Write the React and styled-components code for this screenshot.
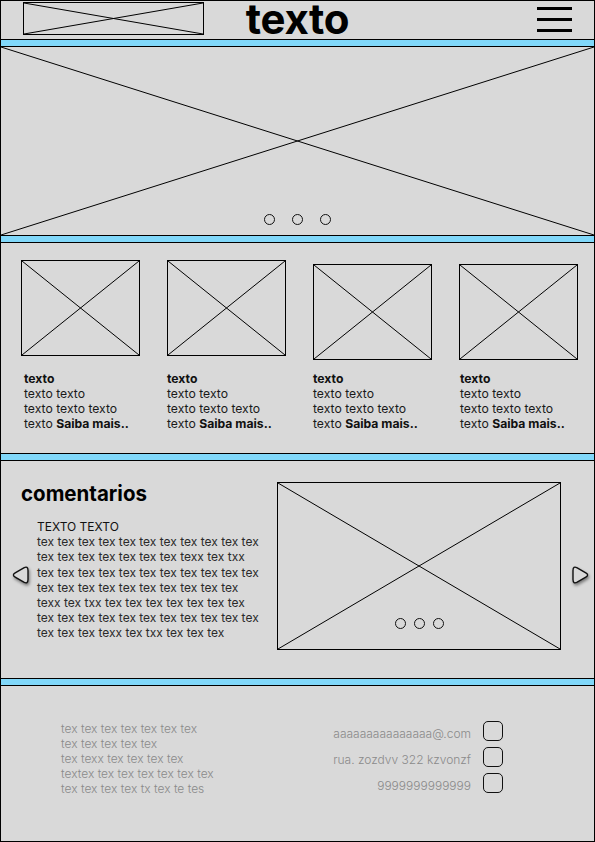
import React from "react";
import styled, { createGlobalStyle } from "styled-components";

const GlobalStyle = createGlobalStyle`
  html, body {
    margin: 0;
    padding: 0;
    background: #d9d9d9;
  }
  * {
    box-sizing: border-box;
  }
`;

const Page = styled.div`
  width: 595px;
  height: 842px;
  border: 1px solid #000;
  background: #d9d9d9;
  display: flex;
  flex-direction: column;
  font-family: Inter, "Noto Sans", sans-serif;
  color: #111;
`;

const Header = styled.header`
  height: 38px;
  display: grid;
  grid-template-columns: 1fr auto 1fr;
  align-items: start;
  padding: 0 22px;
`;

const Title = styled.h1`
  margin: 0;
  font-size: 42px;
  line-height: 34px;
  padding-top: 1px;
  font-weight: 700;
  letter-spacing: -0.3px;
  color: #000;
`;

const Burger = styled.div`
  justify-self: end;
  width: 35px;
  margin-top: 6px;
  display: flex;
  flex-direction: column;
  gap: 8px;
`;

const BurgerBar = styled.span`
  display: block;
  height: 3px;
  background: #000;
`;

const Divider = styled.div`
  height: 8px;
  background: #81d8fa;
  border-top: 1px solid #000;
  border-bottom: 1px solid #000;
  flex-shrink: 0;
`;

const Frame = styled.div`
  position: relative;
  width: ${(p) => p.$w || "auto"};
  height: ${(p) => p.$h};
  margin-top: ${(p) => p.$top || 0}px;
  border: ${(p) => (p.$border ? "1px solid #000" : "none")};
  display: flex;
  flex-direction: column;
  justify-content: flex-end;
  align-items: center;
  padding-bottom: ${(p) => p.$pb || 0}px;
  flex-shrink: 0;
`;

const Cross = styled.svg`
  position: absolute;
  inset: 0;
  width: 100%;
  height: 100%;
`;

const Dots = styled.div`
  position: relative;
  display: flex;
  gap: ${(p) => p.$gap}px;
`;

const Dot = styled.span`
  width: 11px;
  height: 11px;
  border: 1px solid #111;
  border-radius: 50%;
`;

const Placeholder = ({ children, ...rest }) => (
  <Frame {...rest}>
    <Cross viewBox="0 0 100 100" preserveAspectRatio="none">
      <line x1="0" y1="0" x2="100" y2="100" stroke="#000" strokeWidth="1" vectorEffect="non-scaling-stroke" />
      <line x1="100" y1="0" x2="0" y2="100" stroke="#000" strokeWidth="1" vectorEffect="non-scaling-stroke" />
    </Cross>
    {children}
  </Frame>
);

const CardsSection = styled.section`
  height: 210px;
  padding: 17px 0 0 20px;
  display: grid;
  grid-template-columns: repeat(4, 119px);
  column-gap: 27px;
  align-items: start;
`;

const Card = styled.div`
  display: flex;
  flex-direction: column;
`;

const CardMedia = styled.div`
  height: 100px;
`;

const CardText = styled.p`
  margin: 11px 0 0;
  padding-left: ${(p) => p.$inset || 0}px;
  font-size: 12.2px;
  line-height: 15px;
  color: #1a1a1a;
  white-space: nowrap;

  b {
    font-weight: 700;
    color: #111;
  }
`;

const CommentsSection = styled.section`
  height: 217px;
  padding-top: 21px;
  display: grid;
  grid-template-columns: 10px 10px 8px 8px 240px 284px 11px 18px 1fr;
  grid-template-rows: 24px 144px;
`;

const SectionTitle = styled.h2`
  grid-column: 3 / 6;
  grid-row: 1;
  margin: 0;
  font-size: 20.5px;
  line-height: 24px;
  font-weight: 700;
  color: #000;
`;

const Arrow = styled.svg`
  grid-column: ${(p) => p.$col};
  grid-row: 2;
  align-self: center;
  width: 18px;
  height: 20px;
  margin-bottom: 6px;
  filter: drop-shadow(1px 2px 1.5px rgba(0, 0, 0, 0.45));
`;

const Quote = styled.div`
  grid-column: 5;
  grid-row: 2;
  padding-top: 13px;
  font-size: 12px;
  line-height: 15.2px;
  color: #2a2a2a;
  white-space: nowrap;
`;

const QuoteHead = styled.div`
  color: #111;
`;

const CommentMedia = styled.div`
  grid-column: 6;
  grid-row: 1 / 3;
`;

const Footer = styled.footer`
  flex: 1;
  display: flex;
  justify-content: space-between;
  align-items: flex-start;
  padding: 35px 91px 0 60px;
  font-size: 12px;
  line-height: 15px;
  font-weight: 300;
  color: #8a8a8a;
`;

const FooterText = styled.div`
  white-space: nowrap;
`;

const ContactList = styled.div`
  display: flex;
  flex-direction: column;
  gap: 6px;
`;

const ContactRow = styled.div`
  display: flex;
  align-items: center;
  justify-content: flex-end;
  gap: 12px;
`;

const ContactLabel = styled.span`
  padding-top: 5px;
  white-space: nowrap;
`;

const ContactIcon = styled.span`
  width: 20px;
  height: 20px;
  border: 1.5px solid #111;
  border-radius: 5px;
`;

const LeftArrowPath = "M4.2 7.8 L12.8 2.8 Q17 0.6 17 5.4 L17 14.6 Q17 19.4 12.8 17.2 L4.2 12.2 Q0.6 10 4.2 7.8 Z";
const RightArrowPath = "M13.8 7.8 L5.2 2.8 Q1 0.6 1 5.4 L1 14.6 Q1 19.4 5.2 17.2 L13.8 12.2 Q17.4 10 13.8 7.8 Z";

const cards = [
  { top: 0, inset: 3 },
  { top: 0, inset: 0 },
  { top: 4, inset: 0 },
  { top: 4, inset: 1 },
];

const quoteLines = [
  "tex tex tex tex tex tex tex tex tex tex tex",
  "tex tex tex tex tex tex tex texx tex txx",
  "tex tex tex tex tex tex tex tex tex tex tex",
  "tex tex tex tex tex tex tex tex tex tex",
  "texx tex txx tex tex tex tex tex tex tex",
  "tex tex tex tex tex tex tex tex tex tex tex",
  "tex tex tex texx tex txx tex tex tex",
];

const footerLines = [
  "tex tex tex tex tex tex tex",
  "tex tex tex tex tex",
  "tex texx tex tex tex tex",
  "textex tex tex tex tex tex tex",
  "tex tex tex tex tx tex te tes",
];

const contacts = ["aaaaaaaaaaaaaaa@.com", "rua. zozdvv 322 kzvonzf", "9999999999999"];

export default function App() {
  return (
    <>
      <GlobalStyle />
      <Page>
        <Header>
          <Placeholder $border $w="181px" $h="33px" $top={1} />
          <Title>texto</Title>
          <Burger>
            <BurgerBar />
            <BurgerBar />
            <BurgerBar />
          </Burger>
        </Header>
        <Divider />

        <Placeholder $h="188px" $pb={10}>
          <Dots $gap={17}>
            <Dot />
            <Dot />
            <Dot />
          </Dots>
        </Placeholder>
        <Divider />

        <CardsSection>
          {cards.map((c, i) => (
            <Card key={i}>
              <CardMedia>
                <Placeholder $border $w="119px" $h="96px" $top={c.top} />
              </CardMedia>
              <CardText $inset={c.inset}>
                <b>texto</b>
                <br />
                texto texto
                <br />
                texto texto texto
                <br />
                texto <b>Saiba mais..</b>
              </CardText>
            </Card>
          ))}
        </CardsSection>
        <Divider />

        <CommentsSection>
          <SectionTitle>comentarios</SectionTitle>
          <Arrow $col="2 / 4" viewBox="0 0 18 20">
            <path d={LeftArrowPath} fill="#d9d9d9" stroke="#111" strokeWidth="1.4" />
          </Arrow>
          <Quote>
            <QuoteHead>TEXTO TEXTO</QuoteHead>
            {quoteLines.map((l, i) => (
              <div key={i}>{l}</div>
            ))}
          </Quote>
          <CommentMedia>
            <Placeholder $border $w="284px" $h="168px" $pb={20}>
              <Dots $gap={8}>
                <Dot />
                <Dot />
                <Dot />
              </Dots>
            </Placeholder>
          </CommentMedia>
          <Arrow $col="8" viewBox="0 0 18 20">
            <path d={RightArrowPath} fill="#d9d9d9" stroke="#111" strokeWidth="1.4" />
          </Arrow>
        </CommentsSection>
        <Divider />

        <Footer>
          <FooterText>
            {footerLines.map((l, i) => (
              <div key={i}>{l}</div>
            ))}
          </FooterText>
          <ContactList>
            {contacts.map((c) => (
              <ContactRow key={c}>
                <ContactLabel>{c}</ContactLabel>
                <ContactIcon />
              </ContactRow>
            ))}
          </ContactList>
        </Footer>
      </Page>
    </>
  );
}
